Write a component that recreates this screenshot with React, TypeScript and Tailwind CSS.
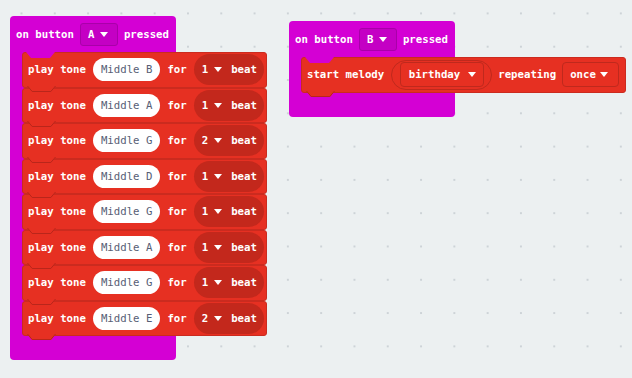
const mono = "font-['DejaVu_Sans_Mono',monospace]";

function Arrow({ className = "" }: { className?: string }) {
  return (
    <svg width="8" height="5" viewBox="0 0 8 5" className={className}>
      <polygon points="0,0 8,0 4,5" fill="#ffffff" />
    </svg>
  );
}

// the little tab a block pushes into the one below it
function Tab({ fill, stroke, className }: { fill: string; stroke?: string; className: string }) {
  return (
    <svg width="30" height="7" viewBox="0 0 30 7" className={`absolute z-10 ${className}`}>
      <polygon points="0,0 5,6 24,6 29,0" fill={fill} />
      {stroke && <polyline points="0.5,0 5.2,5.5 23.8,5.5 28.5,0" fill="none" stroke={stroke} strokeWidth="1" />}
    </svg>
  );
}

// text label, nudged a pixel down to sit like the editor's font
function T({ children, className = "" }: { children: React.ReactNode; className?: string }) {
  return <span className={`pt-[2px] ${className}`}>{children}</span>;
}

function Hat({ letter, pos, children }: { letter: string; pos: string; children: React.ReactNode }) {
  return (
    <div className={`absolute ${pos} flex flex-col`}>
      <div className="relative w-[166px] h-[36px] bg-[#d400d4] rounded-t-[4px] flex items-center gap-[6px] pl-[6px] text-white font-bold">
        <T>on button</T>
        <span className="h-[23px] w-[38px] rounded-[3px] bg-[#c400c4] border border-[#a900a9] flex items-center gap-[6px] pl-[7px]">
          <T>{letter}</T>
          <Arrow />
        </span>
        <T>pressed</T>
        <Tab fill="#d400d4" className="left-[16px] top-full" />
      </div>
      <div className="w-[166px] bg-[#d400d4] pl-[12px]">
        <div className="flex flex-col w-max">{children}</div>
      </div>
      <div className="w-[166px] h-[24px] bg-[#d400d4] rounded-b-[4px]" />
    </div>
  );
}

function ToneBlock({ note, beat }: { note: string; beat: string }) {
  return (
    <div className="relative h-[35.5px] w-[245px] bg-[#e63022] border border-[#cb2b1f] rounded-[3px] flex items-center gap-[7px] pl-[5px] text-white font-bold">
      <T>play tone</T>
      <span className="h-[23px] px-[8px] rounded-full bg-white text-[#575e75] font-normal flex items-center">
        <T>Middle {note}</T>
      </span>
      <T>for</T>
      <span className="h-[31px] w-[70px] rounded-full bg-[#c3281c] flex items-center pl-[8px]">
        <T>{beat}</T>
        <Arrow className="ml-[6px]" />
        <T className="ml-[9px]">beat</T>
      </span>
      <Tab fill="#e63022" stroke="#b9261b" className="left-[4px] top-[calc(100%-1px)]" />
    </div>
  );
}

function MelodyBlock() {
  return (
    <div className="relative h-[35.5px] w-[325px] bg-[#e63022] border border-[#cb2b1f] rounded-[3px] flex items-center gap-[6px] pl-[5px] text-white font-bold">
      <T>start melody</T>
      <span className="ml-[1px] h-[30px] w-[101px] rounded-full border border-[#bf291d] flex items-center justify-center">
        <span className="h-[25px] w-[84px] rounded-[4px] border border-[#bf291d] flex items-center gap-[8px] pl-[8px]">
          <T>birthday</T>
          <Arrow />
        </span>
      </span>
      <T>repeating</T>
      <span className="h-[25px] w-[57px] rounded-[4px] border border-[#bf291d] flex items-center gap-[4px] pl-[7px]">
        <T>once</T>
        <Arrow />
      </span>
      <Tab fill="#e63022" stroke="#b9261b" className="left-[4px] top-[calc(100%-1px)]" />
    </div>
  );
}

const tones = [
  { note: "B", beat: "1" },
  { note: "A", beat: "1" },
  { note: "G", beat: "2" },
  { note: "D", beat: "1" },
  { note: "G", beat: "1" },
  { note: "A", beat: "1" },
  { note: "G", beat: "1" },
  { note: "E", beat: "2" },
];

export default function App() {
  return (
    <div
      className={`relative w-[632px] h-[378px] overflow-hidden bg-[#ecf0f1] bg-[radial-gradient(circle,#cdd3d7_0.9px,transparent_1.3px)] bg-[length:33.3px_33.3px] bg-[position:4.85px_-3.25px] text-[10.7px] leading-none ${mono}`}
    >
      <Hat letter="A" pos="left-[10px] top-[16px]">
        {tones.map((t, i) => (
          <ToneBlock key={i} note={t.note} beat={t.beat} />
        ))}
      </Hat>
      <Hat letter="B" pos="left-[289px] top-[21px]">
        <MelodyBlock />
      </Hat>
    </div>
  );
}
